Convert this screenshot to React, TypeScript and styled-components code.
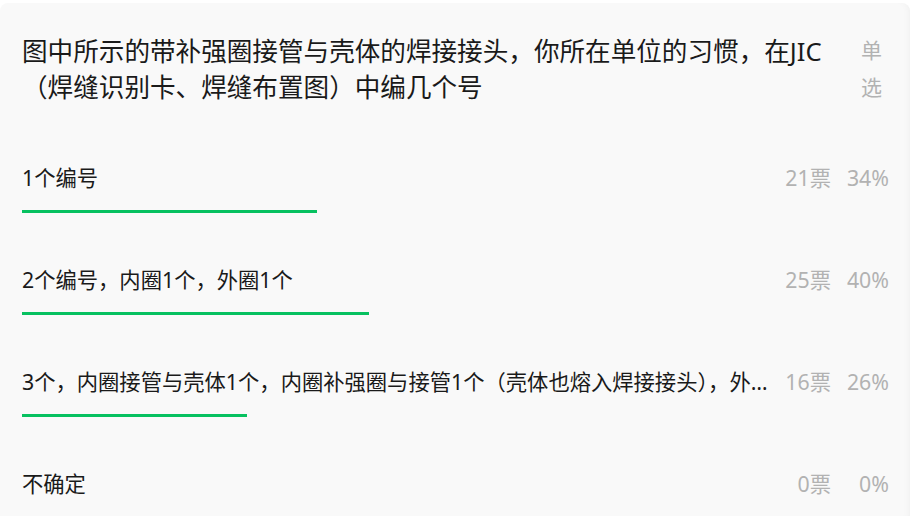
import styled, { createGlobalStyle } from "styled-components";

const options = [
  { label: "1个编号", votes: 21, percent: 34 },
  { label: "2个编号，内圈1个，外圈1个", votes: 25, percent: 40 },
  {
    label:
      "3个，内圈接管与壳体1个，内圈补强圈与接管1个（壳体也熔入焊接接头），外圈1个（仅补强圈与壳体）",
    votes: 16,
    percent: 26,
  },
  { label: "不确定", votes: 0, percent: 0 },
];

const App = () => {
  return (
    <>
      <GlobalStyle />
      <Card>
        <Header>
          <Title>
            图中所示的带补强圈接管与壳体的焊接接头，你所在单位的习惯，在JIC（焊缝识别卡、焊缝布置图）中编几个号
          </Title>
          <Tag>
            <span>单</span>
            <span>选</span>
          </Tag>
        </Header>
        <OptionList>
          {options.map((o) => (
            <Option key={o.label}>
              <OptionRow>
                <Label title={o.label}>{o.label}</Label>
                <Votes>{o.votes}票</Votes>
                <Percent>{o.percent}%</Percent>
              </OptionRow>
              <Track>
                <Bar style={{ width: `${o.percent}%` }} />
              </Track>
            </Option>
          ))}
        </OptionList>
      </Card>
    </>
  );
};

/* STYLE */
const GlobalStyle = createGlobalStyle`
  body {
    margin: 0;
    background: #ffffff;
    font-family: "Noto Sans", "Noto Sans CJK SC", sans-serif;
    overflow: hidden;
  }
`;

const Card = styled.div`
  margin: 3px 2px 0 0;
  height: 513px;
  background: #f9f9f9;
  border-radius: 8px 8px 0 0;
  padding: 16px 21px 0 22px;
  box-sizing: border-box;
  box-shadow: inset -6px 0 10px -8px rgba(0, 0, 0, 0.08);
`;

const Header = styled.div`
  display: flex;
  align-items: flex-start;
  gap: 24px;
`;

const Title = styled.div`
  flex: 1;
  font-size: 25.6px;
  line-height: 36px;
  color: #1a1a1a;
  padding-top: 15px;
`;

const Tag = styled.div`
  display: flex;
  flex-direction: column;
  width: 24px;
  margin-right: 4px;
  padding-top: 13px;
  font-size: 21px;
  line-height: 37px;
  color: #b2b2b2;
`;

const OptionList = styled.div`
  display: flex;
  flex-direction: column;
  gap: 52px;
  margin-top: 57px;
`;

const Option = styled.div`
  display: flex;
  flex-direction: column;
  gap: 17px;
`;

const OptionRow = styled.div`
  display: flex;
  align-items: center;
  height: 30px;
  font-size: 21.3px;
  line-height: 30px;
`;

const Label = styled.div`
  flex: 1;
  min-width: 0;
  color: #1a1a1a;
  white-space: nowrap;
  overflow: hidden;
  text-overflow: ellipsis;
  margin-right: 16px;
`;

const Votes = styled.div`
  color: #b2b2b2;
  white-space: nowrap;
`;

const Percent = styled.div`
  width: 58px;
  text-align: right;
  color: #b2b2b2;
  white-space: nowrap;
`;

const Track = styled.div`
  height: 3px;
`;

const Bar = styled.div`
  height: 100%;
  background: #07c160;
`;

export default App;
